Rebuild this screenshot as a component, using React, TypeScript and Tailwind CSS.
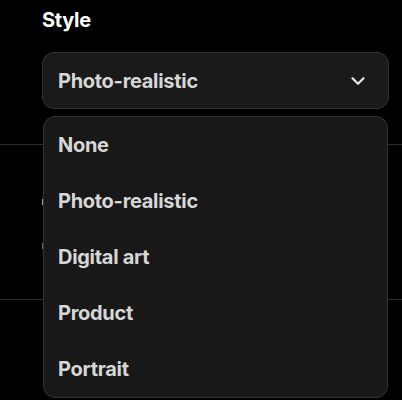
import { ChevronDown } from 'lucide-react';

const OPTIONS = ['None', 'Photo-realistic', 'Digital art', 'Product', 'Portrait'];

export default function App() {
  return (
    <div className="relative h-[400px] w-[402px] overflow-hidden bg-black font-['Inter',sans-serif] text-[20px] font-bold">
      {/* Style section */}
      <div className="border-b border-[#2c2c2c] px-[42px] pb-[35px] pt-[5px]">
        <div className="leading-[30px] tracking-[-0.3px] text-white">Style</div>
        <div className="relative mt-[17px]">
          <button className="flex h-[57px] w-[347px] items-center justify-between rounded-[12px] border border-[#333333] bg-[#1a1a1a] pl-[15px] pr-[19px] text-[#d6d6d6] tracking-[-0.3px]">
            <span>Photo-realistic</span>
            <ChevronDown className="h-[22px] w-[22px] text-[#e6e6e6]" strokeWidth={2.5} />
          </button>

          {/* Open menu */}
          <ul className="absolute left-[1px] top-[64px] z-10 w-[345px] rounded-[12px] border border-[#333333] bg-[#181818]">
            {OPTIONS.map((o) => (
              <li key={o} className="flex h-[56px] items-center px-[14px] tracking-[-0.3px] text-[#d6d6d6]">
                {o}
              </li>
            ))}
          </ul>
        </div>
      </div>

      {/* Covered section */}
      <div className="h-[155px] border-b border-[#2c2c2c] px-[42px] pt-[54px]">
        <div className="h-[6px] w-[1px] bg-[#9a9a9a]" />
        <div className="mt-[38px] h-[6px] w-[1px] bg-[#6a6a6a]" />
      </div>

      {/* Bottom section */}
      <div className="flex items-end justify-between px-[42px] pt-[95px]">
        <div className="ml-[165px] h-[6px] w-[26px] bg-[#cfcfcf]" />
        <span className="text-[#d6d6d6]">1/4</span>
      </div>
    </div>
  );
}
